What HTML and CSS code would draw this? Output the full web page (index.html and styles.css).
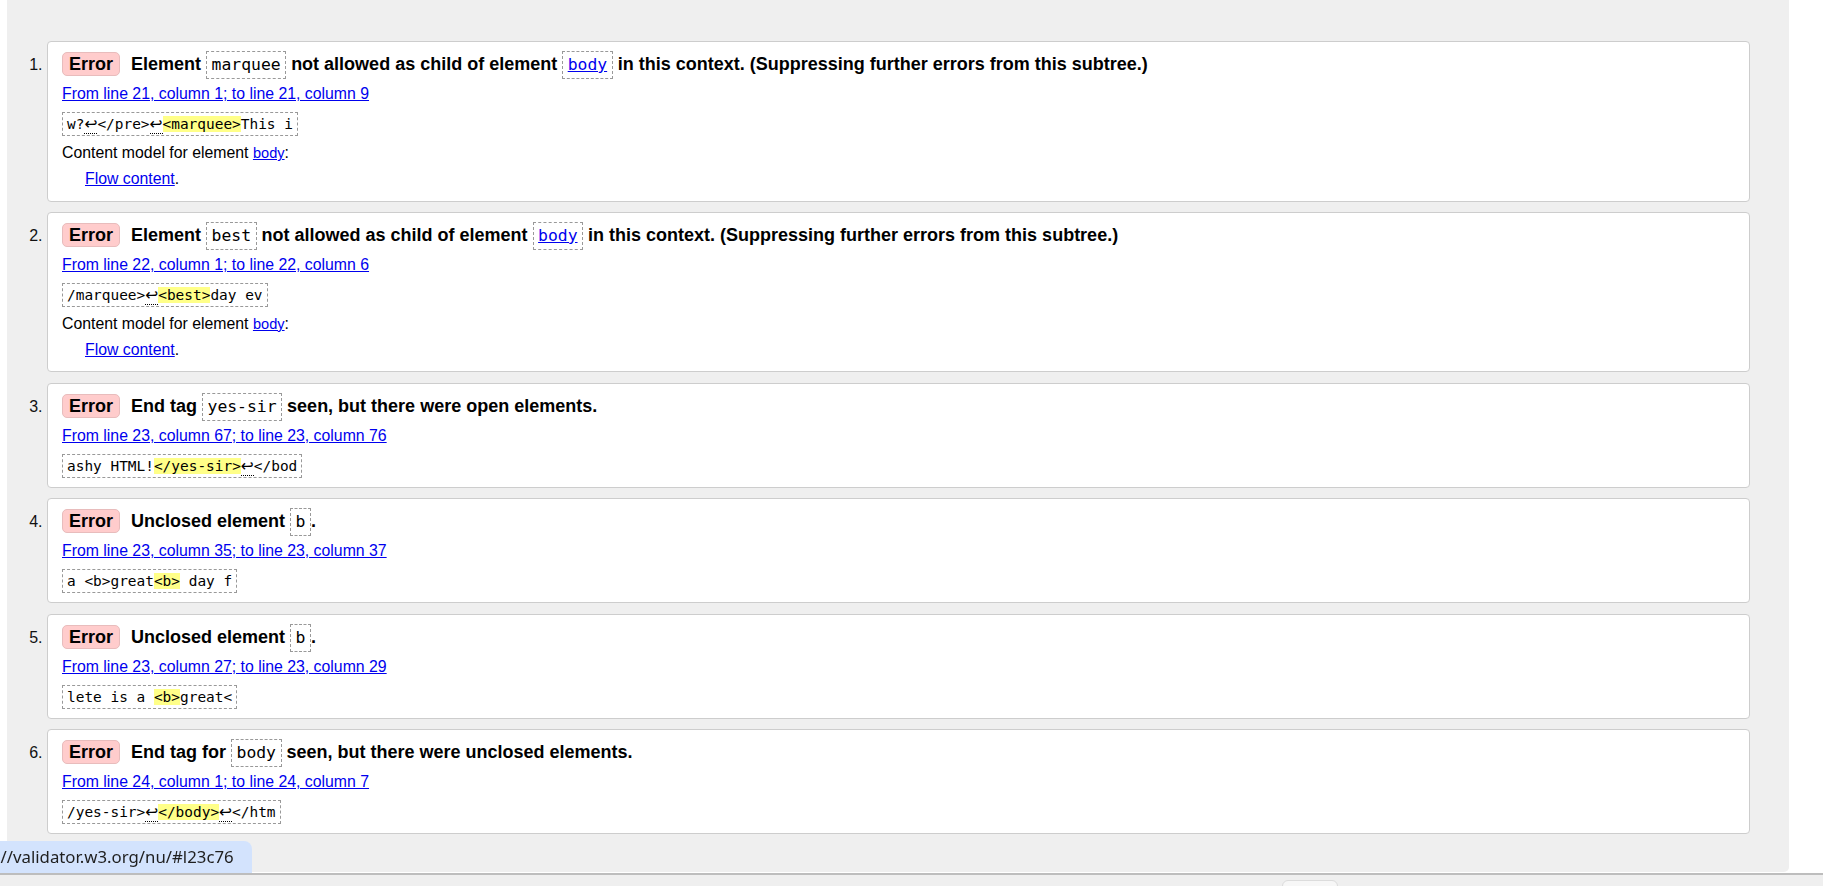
FILE: index.html
```
<!DOCTYPE html>
<html lang="en">
<head>
<meta charset="utf-8">
<title>Validator results</title>
<link rel="stylesheet" href="styles.css">
</head>
<body>
<div class="page">
  <ol class="msgs">
    <li class="msg tall">
      <p class="title"><strong class="badge">Error</strong> Element <code class="tc">marquee</code> not allowed as child of element <code class="tc"><a href="#">body</a></code> in this context. (Suppressing further errors from this subtree.)</p>
      <p class="loc"><a href="#">From line 21, column 1; to line 21, column 9</a></p>
      <p class="ext"><code class="extract">w?<span class="lf">↩</span>&lt;/pre&gt;<span class="lf">↩</span><b class="hl">&lt;marquee&gt;</b>This i</code></p>
      <dl class="cm"><dt>Content model for element <a class="sm" href="#">body</a>:</dt><dd><a href="#">Flow content</a>.</dd></dl>
    </li>
    <li class="msg tall">
      <p class="title"><strong class="badge">Error</strong> Element <code class="tc">best</code> not allowed as child of element <code class="tc"><a href="#">body</a></code> in this context. (Suppressing further errors from this subtree.)</p>
      <p class="loc"><a href="#">From line 22, column 1; to line 22, column 6</a></p>
      <p class="ext"><code class="extract">/marquee&gt;<span class="lf">↩</span><b class="hl">&lt;best&gt;</b>day ev</code></p>
      <dl class="cm"><dt>Content model for element <a class="sm" href="#">body</a>:</dt><dd><a href="#">Flow content</a>.</dd></dl>
    </li>
    <li class="msg">
      <p class="title"><strong class="badge">Error</strong> End tag <code class="tc">yes-sir</code> seen, but there were open elements.</p>
      <p class="loc"><a href="#">From line 23, column 67; to line 23, column 76</a></p>
      <p class="ext"><code class="extract">ashy HTML!<b class="hl">&lt;/yes-sir&gt;</b><span class="lf">↩</span>&lt;/bod</code></p>
    </li>
    <li class="msg">
      <p class="title"><strong class="badge">Error</strong> Unclosed element <code class="tc">b</code>.</p>
      <p class="loc"><a href="#">From line 23, column 35; to line 23, column 37</a></p>
      <p class="ext"><code class="extract">a &lt;b&gt;great<b class="hl">&lt;b&gt;</b> day f</code></p>
    </li>
    <li class="msg">
      <p class="title"><strong class="badge">Error</strong> Unclosed element <code class="tc">b</code>.</p>
      <p class="loc"><a href="#">From line 23, column 27; to line 23, column 29</a></p>
      <p class="ext"><code class="extract">lete is a <b class="hl">&lt;b&gt;</b>great&lt;</code></p>
    </li>
    <li class="msg last">
      <p class="title"><strong class="badge">Error</strong> End tag for <code class="tc">body</code> seen, but there were unclosed elements.</p>
      <p class="loc"><a href="#">From line 24, column 1; to line 24, column 7</a></p>
      <p class="ext"><code class="extract">/yes-sir&gt;<span class="lf">↩</span><b class="hl">&lt;/body&gt;</b><span class="lf">↩</span>&lt;/htm</code></p>
    </li>
  </ol>
</div>
<div class="status"><span class="status-text">://validator.w3.org/nu/#l23c76</span></div>
<div class="shelf"><span class="shelf-btn"></span></div>
</body>
</html>
```
FILE: styles.css
```
html, body {
  margin: 0;
  padding: 0;
}
body {
  background: #fff;
  overflow: hidden;
  height: 886px;
  font-family: "Liberation Sans", Arial, sans-serif;
  font-size: 18px;
  color: #000;
}
.page {
  margin-left: 7px;
  width: 1782px;
  background: #efefef;
  border-radius: 0 0 5px 5px;
  padding: 41px 0 38px;
}
.msgs {
  list-style: decimal;
  margin: 0;
  padding: 0 39px 0 40px;
}
.msg {
  background: #fff;
  border: 1px solid #cdcdcd;
  border-radius: 4px;
  padding: 8px 14px 9px;
  margin-bottom: 10.4px;
}
.msg.last {
  margin-bottom: 0;
}
.msg::marker {
  color: #111;
  font-size: 16px;
}
.title {
  margin: 0;
  height: 28px;
  line-height: 28px;
  font-weight: bold;
  white-space: nowrap;
}
.badge {
  display: inline-block;
  background: #fcc;
  border: 1px solid #e8bcbc;
  border-radius: 5px;
  padding: 1px 6px;
  line-height: 20px;
  margin-right: 6px;
}
.tc {
  display: inline-block;
  font-family: "DejaVu Sans Mono", monospace;
  font-weight: normal;
  font-size: 16.4px;
  line-height: 20px;
  padding: 3px 4.5px;
  border: 1px dashed #999;
}
a {
  color: #00e;
  text-decoration: underline;
}
.loc {
  margin: 6px 0 0;
  line-height: 20px;
  font-size: 15.84px;
}
.ext {
  margin: 8px 0 0;
  height: 24px;
  line-height: 24px;
}
.extract {
  display: inline-block;
  vertical-align: top;
  font-family: "DejaVu Sans Mono", monospace;
  font-size: 14.45px;
  line-height: 18px;
  padding: 2px 4px;
  border: 1px dashed #999;
}
.hl {
  background: #ff8;
  font-weight: normal;
}
.lf {
  font-family: "DejaVu Sans", sans-serif;
  font-size: 15.5px;
  border-bottom: 1px dotted #000;
}
.cm {
  margin: 7px 0 0;
  font-size: 15.84px;
  line-height: 20px;
}
.cm dt {
  margin: 0;
}
.cm dd {
  margin: 6px 0 2.5px 23px;
}
.sm {
  font-size: 14.6px;
}
.status {
  position: fixed;
  left: 0;
  bottom: 13px;
  width: 252px;
  height: 32px;
  background: #d3e3fd;
  border-radius: 0 8px 0 0;
  overflow: hidden;
  white-space: nowrap;
}
.status-text {
  display: block;
  margin-left: -4px;
  font-family: "Noto Sans", "Open Sans", sans-serif;
  font-size: 16.8px;
  line-height: 32px;
  color: #1f1f1f;
}
.shelf {
  position: fixed;
  left: 0;
  right: 0;
  bottom: 0;
  height: 11px;
  border-top: 2px solid #bdbdbd;
  background: #efefef;
}
.shelf-btn {
  position: absolute;
  left: 1282px;
  top: 5px;
  width: 54px;
  height: 8px;
  background: #f7f7f7;
  border: 1px solid #dcdcdc;
  border-radius: 6px 6px 0 0;
}
```
